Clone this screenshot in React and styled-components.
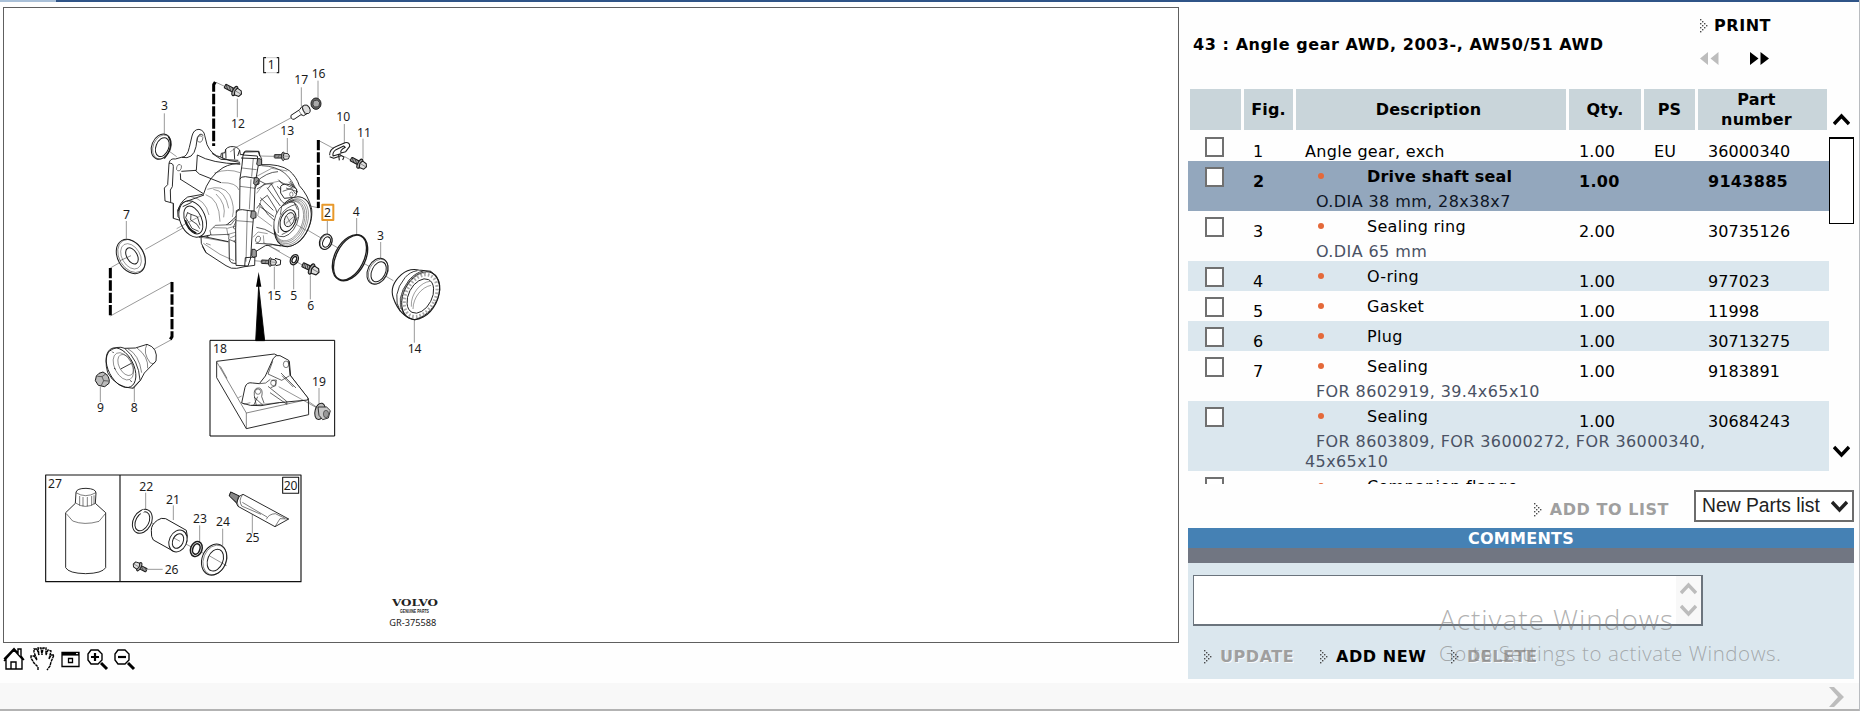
import styled, { createGlobalStyle } from 'styled-components'

const GlobalStyle = createGlobalStyle`
    body {
        margin: 0;
        background: #fefefe;
        overflow: hidden;
        font-family: "DejaVu Sans", Verdana, sans-serif;
        font-size: 16px;
        color: #000;
    }
    * { box-sizing: border-box; }
`

const Page = styled.div`
    width: 1860px;
    height: 711px;
    display: flex;
    flex-direction: column;
    position: relative;
    overflow: hidden;
    border-right: 1px solid #b9bcc0;
`

const TopLine = styled.div`
    height: 2px;
    flex: none;
    background: linear-gradient(to right, #a9c0d8 56px, #2f5487 56px);
`

const Main = styled.div`
    height: 681px;
    flex: none;
    display: flex;
`

const LeftPane = styled.section`
    width: 1180px;
    padding: 5px 0 0 3px;
    margin-right: 8px;
`

const DrawingFrame = styled.div`
    width: 1176px;
    height: 636px;
    border: 1px solid #5f5f5f;
    padding: 32px 0 0 26px;
    background: #fff;

    svg { display: block; }
`

const Tools = styled.div`
    display: flex;
    padding-top: 3px;

    svg { display: block; margin-right: 3px; }
`

const RightPane = styled.section`
    width: 666px;
    display: flex;
    flex-direction: column;
`

const Heading = styled.header`
    height: 87px;
    display: flex;
    justify-content: space-between;
    padding: 0 80px 0 5px;
    font-weight: bold;
`

const Title = styled.h1`
    margin: 33px 0 0;
    font-size: 16px;
    line-height: 20px;
    letter-spacing: .57px;
    white-space: nowrap;
`

const PrintArea = styled.div`
    width: 74px;
    padding-top: 14px;
`

const Pager = styled.div`
    display: flex;
    justify-content: space-between;
    width: 69px;
    margin-top: 15px;

    svg { display: block; }
`

const Action = styled.span`
    display: inline-flex;
    align-items: center;
    height: 20px;
    line-height: 20px;
    font-weight: bold;
    white-space: nowrap;
    letter-spacing: .55px;
    color: ${p => (p.$off ? '#9f9f9f' : '#000')};
    text-shadow: ${p => (p.$off ? '1px 1px 0 rgba(255,255,255,.8)' : 'none')};

    svg { margin-right: ${p => p.$gap || 8}px; flex: none; }
`

const TableArea = styled.div`
    display: flex;
    height: 395px;
`

const Table = styled.div`
    width: 641px;
    display: flex;
    flex-direction: column;
`

const HeadRow = styled.div`
    display: grid;
    grid-template-columns: 51px 49px 270px 72px 51px 129px;
    gap: 3px;
    height: 41px;
    margin: 0 0 1px 2px;
    flex: none;
`

const HeadCell = styled.div`
    display: flex;
    align-items: center;
    justify-content: center;
    text-align: center;
    background: #c9d5da;
    font-weight: bold;
    line-height: 20px;
    letter-spacing: .2px;
    padding-right: ${p => p.$shift || 0}px;
`

const Rows = styled.div`
    flex: 1;
    overflow: hidden;
`

const Row = styled.div`
    display: grid;
    grid-template-columns: 65px 52px 274px 75px 54px 1fr;
    height: ${p => 30 + p.$extra * 20}px;
    line-height: 20px;
    white-space: nowrap;
    background: ${p => (p.$selected ? '#93a7bd' : p.$tinted ? '#dbe7ee' : 'transparent')};
`

const Check = styled.span`
    width: 19px;
    height: 20px;
    margin: 6px 0 0 17px;
    border: 2px solid #707070;
    background: #fff;
`

const Value = styled.span`
    padding-top: 11px;
    font-weight: ${p => (p.$bold ? 'bold' : 'normal')};
    letter-spacing: ${p => (p.$bold ? '.3px' : '.1px')};
`

const Description = styled.div`
    padding-top: ${p => (p.$child ? 6 : 11)}px;
`

const Name = styled.div`
    display: flex;
    align-items: center;
    font-weight: ${p => (p.$bold ? 'bold' : 'normal')};
    letter-spacing: ${p => (p.$bold ? '.2px' : '.3px')};
`

const Bullet = styled.i`
    width: 6px;
    height: 6px;
    margin: 0 43px 2px 13px;
    border-radius: 50%;
    background: #e4693a;
`

const Note = styled.div`
    margin-top: 5px;
    line-height: 20px;
    color: ${p => (p.$selected ? '#0e1524' : '#4a5264')};
    letter-spacing: .4px;
    text-indent: 11px;
    white-space: pre;
`

const Scroller = styled.div`
    width: 25px;
    padding-top: 24px;
    display: flex;
    flex-direction: column;
    align-items: center;

    svg { display: block; }
`

const Thumb = styled.div`
    width: 25px;
    height: 87px;
    margin: 11px 0 221px;
    border: 1px solid #000;
    border-top-width: 2px;
    background: #fff;
`

const ListBar = styled.div`
    display: flex;
    height: 44px;
    justify-content: flex-end;
    align-items: flex-start;
    padding-top: 6px;
`

const AddToList = styled.div`
    padding-top: 10px;
    margin-right: 25px;
`

const Select = styled.div`
    width: 160px;
    height: 32px;
    border: 2px solid #6c6c6c;
    background: #fff;
    padding: 0 4px 0 6px;
    display: flex;
    align-items: center;
    justify-content: space-between;
    font: 19.3px/26px "Liberation Sans", Arial, sans-serif;
    color: #222;
    white-space: nowrap;
`

const CommentsTitle = styled.div`
    height: 20px;
    line-height: 21px;
    background: #4581b4;
    color: #fff;
    font-weight: bold;
    text-align: center;
    letter-spacing: .25px;
`

const GrayBar = styled.div`
    height: 15px;
    background: #717682;
`

const CommentsBody = styled.div`
    height: 116px;
    background: #dbe7ee;
    padding: 12px 5px;
`

const TextBox = styled.div`
    width: 510px;
    height: 51px;
    border: 2px solid #6b747d;
    border-width: 1px 2px 2px 1px;
    background: #fff;
    display: flex;
    justify-content: flex-end;
`

const TextScroll = styled.div`
    width: 25px;
    background: #f8f8f8;
    display: flex;
    flex-direction: column;
    align-items: center;
    justify-content: space-between;
    padding: 6px 0 7px;
`

const Buttons = styled.div`
    display: flex;
    padding: 21px 0 0 11px;
`

const ButtonSlot = styled.div`
    width: ${p => p.$width}px;
`

const Footer = styled.footer`
    height: 26px;
    flex: none;
    background: #f8f8f8;
    display: flex;
    justify-content: flex-end;
    padding: 4px 14px 0 0;
`

const BottomLine = styled.div`
    height: 2px;
    flex: none;
    background: #b3b3b3;
`

// sits over the comments panel
const Watermark = styled.div`
    position: absolute;
    left: 1439px;
    top: 600px;
    color: rgba(125, 125, 125, .6);
    font-family: "Open Sans", "Noto Sans", sans-serif;
    font-weight: 300;
    white-space: nowrap;
`

const WatermarkTitle = styled.div`
    font-size: 28px;
    line-height: 38px;
    letter-spacing: .95px;
`

const WatermarkText = styled.div`
    font-size: 20.5px;
    line-height: 30px;
    letter-spacing: .55px;
`

const arrowDots = [[0, 0], [2, 2], [0, 4], [4, 4], [2, 6], [6, 6], [0, 8], [4, 8], [2, 10], [0, 12]]

function DotArrow() {
    return (
        <svg width="8" height="14" viewBox="0 0 8 14">
            {arrowDots.map(([x, y]) => <rect key={`${x}-${y}`} x={x} y={y} width="1.4" height="1.4" fill="#4a4a4a" />)}
        </svg>
    )
}

function Chevron({ up, color = '#000' }) {
    return (
        <svg width="17" height="13" viewBox="0 0 17 13">
            <path d={up ? 'M1 11 8.5 3 16 11' : 'M1 2 8.5 10 16 2'} fill="none" stroke={color} strokeWidth="3.4" />
        </svg>
    )
}

function Ring({ x, y, rx, ry, a = 24, inner = 0.68, dx = 0, thick = 3 }) {
    return (
        <g transform={`translate(${x} ${y}) rotate(${a})`} strokeWidth={thick}>
            <ellipse cx={-dx} rx={rx} ry={ry} fill="#fff" />
            {dx > 0 && <ellipse rx={rx - dx / 2} ry={ry * 0.96} strokeWidth="1.4" />}
            <ellipse cx={dx / 3} rx={rx * inner} ry={ry * (inner + 0.08)} fill="#fff" />
        </g>
    )
}

// threaded shaft on the left, flange and hex head on the right
function Bolt({ x, y, a = 0, len = 34, size = 1 }) {
    const threads = []
    for (let i = 3; i < len - 2; i += 5) threads.push(i)
    return (
        <g transform={`translate(${x} ${y}) rotate(${a}) scale(${size})`} strokeWidth="3.2">
            <rect x="0" y="-6" width={len} height="12" rx="2" fill="#ccc" />
            {threads.map(t => <path key={t} d={`M${t} -6 l3 12`} strokeWidth="2" />)}
            <ellipse cx={len + 2} cy="0" rx="6" ry="15" fill="#aaa" />
            <path d={`M${len + 5} -11 l14 2 5 8 -4 10 -14 2 -4 -11z`} fill="#ddd" />
            <path d={`M${len + 4} -1 l18 1`} strokeWidth="1.2" />
        </g>
    )
}

const dashed = [
    'M556 126 L551 134 V318',
    'M865 300 V504',
    'M241 684 V828',
    'M426 726 V890 L421 898',
]

const leaders = [
    'M403 220V282', 'M622 176V232', 'M814 142V198', 'M864 122V176', 'M943 252V310', 'M999 296V356',
    'M772 294V338', 'M892 540V584', 'M980 534V584', 'M1052 606V656', 'M289 543V596', 'M733 680V748',
    'M791 674V748', 'M841 706V778', 'M1153 840V908', 'M211 1040V1086', 'M313 1038V1086', 'M867 1044V1092',
    'M347 1358V1410', 'M430 1396V1440', 'M509 1456V1506', 'M578 1466V1516', 'M667 1422V1480', 'M354 1588H398',
]

const axes = [
    'M558 127 590 142', 'M396 318 440 350', 'M622 320 786 232', 'M690 348 732 349', 'M867 302 912 326',
    'M944 350 962 360', 'M346 628 512 534', 'M241 684 300 650', 'M241 828 426 726', 'M426 898 290 972',
    'M790 545 1090 722', 'M700 608 836 686', 'M232 1004 270 986', 'M842 498 866 504', 'M672 662 694 664',
    'M342 1437 372 1452', 'M430 1492 590 1577', 'M764 1035 858 1100',
]

const labels = [
    [713, 88, '1'], [393, 210, '3'], [603, 265, '12'], [793, 132, '17'], [845, 113, '16'], [751, 286, '13'],
    [919, 244, '10'], [981, 291, '11'], [882, 531, '2'], [968, 528, '4'], [1041, 600, '3'], [279, 537, '7'],
    [712, 781, '15'], [781, 781, '5'], [832, 811, '6'], [1133, 940, '14'], [549, 940, '18'], [201, 1115, '9'],
    [302, 1115, '8'], [846, 1038, '19'], [54, 1343, '27'], [328, 1353, '22'], [408, 1392, '21'],
    [489, 1449, '23'], [558, 1459, '24'], [647, 1505, '25'], [404, 1601, '26'], [761, 1350, '20'],
]

function Housing() {
    return (
        <g transform="translate(270 180)" strokeWidth="2.8">
            <path fill="#fff" d="M160 310 135 303 133 264 143 254 147 190Q150 174 166 177L184 172Q202 172 208 142L216 108Q221 88 237 88 252 91 254 106L261 134Q276 167 302 171L304 160 315 158 317 148Q328 135 350 142L359 150 361 164 370 163 376 153 417 154 420 168 425 176 423 194Q481 191 508 212 530 231 538 257 564 284 575 327C580 375 550 432 504 440L458 434 436 437 405 456 404 496 374 500 350 505Q334 508 318 497L258 458 244 430 243 408 217 396 187 363 160 355Z" />
            <path d="M147 190Q160 188 160 200L157 260 151 270 152 306M160 310 160 355M187 363 174 350 173 330 180 318M185 172Q220 180 228 140L232 113Q240 96 250 107M302 172 330 182 360 187M276 160 303 178 355 181M232 165Q275 190 360 192M180 237 250 281M181 220 182 238M225 210 238 222 303 248M232 165 229 211 184 214M317 148 318 176M342 145 344 178M359 150 353 168M308 160V175" />
            <ellipse cx="240" cy="117" rx="8" ry="10" strokeWidth="1.6" transform="rotate(25 240 117)" />
            <ellipse cx="177" cy="203" rx="7" ry="10" strokeWidth="1.6" transform="rotate(20 177 203)" />
            <path d="M250 284Q265 230 309 203 337 188 361 192M248 283 203 291Q176 309 175 334M259 411 300 389Q351 354 358 334" />
            <path strokeWidth="1.3" d="M262 268Q308 252 329 285 346 321 337 351M280 268Q316 272 326 325M288 282Q320 312 311 352M257 284Q298 296 300 365M283 219Q325 204 360 218M210 289Q257 298 267 345M304 248Q349 247 357 270" />
            <ellipse cx="218" cy="357" rx="38" ry="57" transform="rotate(-23 218 357)" fill="#fff" />
            <path d="M200 304 252 285M237 412 266 406M188 320 215 307" />
            <ellipse cx="220" cy="360" rx="25" ry="44" transform="rotate(-23 220 360)" />
            <path strokeWidth="2.4" d="M203 337 197 353 206 367 216 385 236 394M202 338 213 343 212 360 231 373 239 386M213 343 232 350 240 376" />
            <path d="M196 360Q204 389 229 400" strokeWidth="5" />
            <path fill="#fff" d="M270 392 286 376 333 374 345 358 350 360 342 377 340 384 355 394 363 407 342 424 326 418 327 403 273 405Z" strokeWidth="2" />
            <path strokeWidth="1.4" d="M280 383 320 384 324 407M322 385 355 376M325 403 352 395M330 414 353 404M244 412 325 426M250 430 300 463 342 482M258 430 272 435" />
            <path d="M327 420 328 478Q331 492 349 490L374 486M243 408 325 425M258 458 247 439M341 424 348 428 348 482" />
            <path fill="#fff" d="M369 165 412 168 415 195 409 230 405 262 402 336 397 390 392 474 384 498 348 496 347 388 349 332 359 327 360 235 366 195Z" />
            <path d="M370 166 372 156 415 155 419 168M359 238Q362 229 376 230L408 235M349 338Q351 329 367 329L402 334M363 174 411 176M374 500 376 473 405 471" />
            <path strokeWidth="1.6" d="M360 259 406 265M349 362 399 366M382 330 378 485M393 238 388 328M400 174 395 230M366 204 410 209" />
            <g fill="#999">
                <path d="M413 176h8l4 5v14l-9 2-6-4zM403 233h10l4 5v14l-10 3-6-4zM394 333h10l4 5v15l-10 3-6-4zM396 448h9l4 5v17l-10 2-4-5z" />
            </g>
            <path strokeWidth="2.2" d="M425 197Q466 198 494 219 519 242 532 278M407 247Q440 216 474 215M411 267 437 252 460 251M418 309 445 345 474 371M421 302 442 286 467 326 472 342M421 293 460 331M444 265 454 252 484 303 493 310M441 263 481 318M471 259 501 286M475 239 509 274M510 243 533 276M437 252 418 242 405 265M419 313 410 325M420 320 462 350M409 382 434 388 463 403M407 430 453 432 482 438" />
            <path strokeWidth="1.3" d="M408 230 455 205 502 213M410 280 429 254 479 243M423 300 413 347 456 379M399 412 414 396 443 401M430 406 432 429" />
            <path fill="#fff" d="M482 279V259Q489 249 509 254L530 267 529 285 523 292 493 295Z" />
            <path strokeWidth="2" d="M498 264 530 274M488 274 514 265 527 282M506 247 523 260M478 244 520 265" />
            <ellipse cx="514" cy="283" rx="5" ry="7" strokeWidth="1.5" />
            <ellipse cx="518" cy="365" rx="51" ry="78" transform="rotate(22 518 365)" fill="#fff" />
            <g strokeWidth="1.2">
                <ellipse cx="515" cy="366" rx="46" ry="73" transform="rotate(22 515 366)" />
                <ellipse cx="512" cy="365" rx="44" ry="69" transform="rotate(22 512 365)" />
                <ellipse cx="509" cy="364" rx="42" ry="65" transform="rotate(22 509 364)" />
                <ellipse cx="507" cy="363" rx="40" ry="62" transform="rotate(22 507 363)" />
            </g>
            <ellipse cx="499" cy="358" rx="34" ry="55" transform="rotate(22 499 358)" fill="#fff" strokeWidth="2" />
            <path d="M475 399C470 350 490 323 528 313M485 404Q521 391 532 352M481 344 485 319 522 301M523 307 532 329" strokeWidth="2" />
            <ellipse cx="504" cy="362" rx="22" ry="34" transform="rotate(22 504 362)" fill="#fff" strokeWidth="3" />
            <ellipse cx="508" cy="359" rx="14" ry="22" transform="rotate(22 508 359)" fill="#f2f2f2" strokeWidth="2.6" />
            <path d="M497 371 521 350M500 348 515 376" strokeWidth="1.5" />
            <ellipse cx="414" cy="418" rx="7" ry="10" strokeWidth="1.7" transform="rotate(22 414 418)" />
            <path d="M170 386 239 349M530 374 560 392M430 428 480 454M330 156 352 140" strokeWidth="1.2" />
        </g>
    )
}

function PartsDrawing() {
    return (
        <svg width="430" height="600" viewBox="0 0 1290 1800" fill="none" stroke="#1c1c1c" strokeWidth="2.6" strokeLinejoin="round">
            <g stroke="#666" strokeWidth="2">
                {axes.map(d => <path key={d} d={d} />)}
                {leaders.map(d => <path key={d} d={d} />)}
            </g>
            <g stroke="#000" strokeWidth="9" strokeDasharray="31 6">
                {dashed.map(d => <path key={d} d={d} />)}
            </g>

            <Housing />

            <path d="M708 53H701V98H708M740 53H746V98H740" strokeWidth="3.4" />
            <path d="M708 53H740M708 98H740" stroke="#999" strokeWidth="1.5" />
            <Bolt x={585} y={138} a={27} len={31} />
            <Bolt x={733} y={349} len={29} size={0.86} />
            <Bolt x={963} y={357} a={28} len={28} />
            <Bolt x={818} y={674} a={26} len={25} size={1.1} />
            <Bolt x={694} y={665} a={3} len={29} size={0.86} />
            <path d="M735 655 752 660 751 674 737 677" strokeWidth="3" />

            <path d="M783 226 809 209 816 199 833 196Q844 206 836 218L821 227 813 224 792 238Q781 238 783 226Z" fill="#fff" strokeWidth="3" />
            <ellipse cx="829" cy="208" rx="10" ry="14" transform="rotate(-28 829 208)" fill="#ddd" />
            <path d="M806 211 816 226M817 202 824 222" strokeWidth="1.5" />
            <ellipse cx="858" cy="191" rx="15" ry="17" fill="#666" strokeWidth="3" />
            <path d="M850 183 862 180 869 188 866 200 853 201 849 194Z" fill="#aaa" strokeWidth="2" />

            <path d="M899 346Q898 328 920 319L945 308Q960 306 959 319L947 335 933 339Q929 331 946 322L941 318 918 329Q907 336 909 348L932 341M899 350 911 355 933 347M929 344 942 351 938 360M926 344 928 361" strokeWidth="3.2" />

            <Ring x={396} y={321} rx={28} ry={39} a={22} dx={3} />
            <path d="M415 290Q433 318 403 356" strokeWidth="3.4" />
            <Ring x={889} y={606} rx={18} ry={24} dx={2} thick={3.4} inner={0.6} />
            <Ring x={960} y={653} rx={46} ry={74} a={27} thick={4} inner={0.9} />
            <Ring x={1045} y={695} rx={29} ry={41} a={26} inner={0.7} dx={3} />
            <Ring x={793} y={659} rx={11} ry={16} a={27} inner={0.55} thick={4} />

            <Ring x={305} y={648} rx={39} ry={55} a={-30} inner={0.4} dx={3} />
            <ellipse cx="303" cy="649" rx="27" ry="41" transform="rotate(-30 303 649)" strokeWidth="1.2" />
            <path d="M270 662 303 647" strokeWidth="1.5" />

            <path d="M1090 774Q1077 737 1114 704 1137 684 1166 690L1202 694Q1232 716 1229 750 1219 818 1155 839 1110 831 1090 774Z" fill="#fff" strokeWidth="3.2" />
            <path d="M1111 815Q1083 764 1125 713 1140 695 1162 692M1123 824Q1092 780 1137 720 1158 697 1180 693" />
            <ellipse cx="1172" cy="767" rx="51" ry="76" transform="rotate(27 1172 767)" strokeWidth="3.4" />
            <ellipse cx="1172" cy="767" rx="44" ry="67" transform="rotate(27 1172 767)" stroke="#aaa" strokeWidth="10" strokeDasharray="5 6" />
            <ellipse cx="1171" cy="768" rx="35" ry="55" transform="rotate(27 1171 768)" fill="#fff" />
            <path d="M1113 806Q1107 760 1140 722 1160 699 1188 697" strokeWidth="6" stroke="#777" strokeDasharray="3 3" />
            <path d="M1144 800C1141 759 1174 726 1200 724M1149 807C1149 773 1175 741 1203 736" strokeWidth="1.3" />

            {/* drive flange and its nut */}
            <path d="M236 935Q262 915 284 925L316 924 351 913Q385 923 378 963L343 999 332 1020 310 1045Q258 1043 233 998 222 958 236 935Z" fill="#fff" strokeWidth="2.8" />
            <ellipse cx="273" cy="983" rx="38" ry="64" transform="rotate(-27 273 983)" />
            <path d="M284 925Q326 960 330 1020M308 1044 331 1021" />
            <path d="M293 926Q327 943 335 998M321 924Q356 950 353 985M351 913Q337 938 361 969 370 974 376 967" strokeWidth="1.6" />
            <ellipse cx="280" cy="979" rx="26" ry="44" transform="rotate(-27 280 979)" strokeWidth="1.3" />
            <ellipse cx="287" cy="975" rx="20" ry="34" transform="rotate(-27 287 975)" strokeWidth="1.3" />
            <path d="M272 987 304 970M247 935l4 4M252 984l5 4M301 1021l4 5" />
            <path d="M207 1000 219 996Q242 1008 237 1030L224 1040 205 1036 196 1022 199 1008Z" fill="#bbb" strokeWidth="3" />
            <path d="M202 1009 216 1010 221 1022 214 1036M216 1010 227 1002M221 1022 235 1023" strokeWidth="1.8" />

            {/* bracket kit */}
            <path d="M686 696 678 740H694Z" fill="#000" stroke="none" />
            <path d="M686 738 677 902H704Z" fill="#000" stroke="#000" />
            <path d="M540 901H914V1188H540Z" stroke="#000" strokeWidth="3" />
            <path d="M560 964 733 942 778 964 782 1008 835 1076 836 1124 649 1166 560 1013Z" fill="#fff" strokeWidth="2.8" />
            <path d="M561 967 649 1119 835 1078M649 1119V1166M571 979 591 1015" strokeWidth="1.6" />
            <path fill="#fff" strokeWidth="2.8" d="M635 1089 645 1042Q650 1025 668 1029L688 1031 706 1008 730 955Q737 943 750 947L776 961 780 1005 834 1074 833 1080 747 1088 693 1097 661 1096Z" />
            <path d="M679 1097 673 1067Q670 1042 688 1044 700 1048 695 1070L702 1089M714 1039 770 1084 771 1093 720 1058M753 999 798 1044M756 1007 790 1041M721 1018 707 1029 689 1031M722 1043 737 1037 739 1020 724 1021M672 1071 699 1096M683 1070 671 1096M728 964 714 1002 755 1021 779 1007" strokeWidth="2" />
            <circle cx="684" cy="1055" r="8" strokeWidth="1.6" />
            <circle cx="730" cy="1029" r="8" strokeWidth="1.6" />
            <ellipse cx="768" cy="973" rx="8" ry="10" strokeWidth="1.7" />
            <path d="M625 1073 635 1068M641 1093 661 1088M664 1096 747 1088M746 1040 858 1102" strokeWidth="1.4" />
            <ellipse cx="870" cy="1114" rx="15" ry="25" transform="rotate(15 870 1114)" fill="#bbb" strokeWidth="3" />
            <path d="M864 1101 890 1101 901 1112 895 1134 878 1139 867 1126Z" fill="#c9c9c9" strokeWidth="2.6" />
            <ellipse cx="888" cy="1122" rx="8" ry="11" fill="#999" strokeWidth="1.6" />

            {/* service kit */}
            <path d="M47 1305H813V1625H47ZM270 1305V1625" stroke="#111" strokeWidth="3.4" />
            <rect x="758" y="1312" width="48" height="48" stroke="#111" strokeWidth="3.2" />
            <path d="M138 1357Q140 1345 168 1345 198 1346 198 1359L196 1390 227 1418V1583Q217 1600 167 1601 116 1600 107 1583V1418L136 1390Z" fill="#fff" strokeWidth="2.8" />
            <path d="M138 1358Q166 1376 198 1358M137 1389Q165 1409 196 1390M149 1368V1397M159 1371V1399M172 1371V1399M185 1368V1397M192 1366V1393M109 1421 128 1443Q163 1457 207 1444L226 1421" strokeWidth="1.7" />

            <Ring x={337} y={1444} rx={27} ry={38} a={28} inner={0.72} />
            <path d="M333 1421 342 1410" stroke="#fff" strokeWidth="7" />
            <path d="M364 1472Q363 1454 382 1441 393 1432 407 1436L469 1471Q476 1489 467 1507 457 1531 431 1534L370 1500Q363 1492 364 1472Z" fill="#fff" strokeWidth="3" />
            <Ring x={444} y={1503} rx={26} ry={34} a={25} inner={0.6} />
            <Ring x={499} y={1527} rx={17} ry={23} a={20} inner={0.62} thick={4.6} />
            <Ring x={555} y={1560} rx={36} ry={48} a={22} inner={0.63} dx={3} />
            <path d="M430 1493 450 1504M539 1548 588 1576" strokeWidth="1.4" />
            <g transform="translate(345 1589) rotate(207)"><Bolt x={-5} y={0} len={25} size={0.9} /></g>

            <path d="M602 1356 628 1369 639 1363 776 1437 735 1460 624 1399 619 1389 598 1367Z" fill="#fff" strokeWidth="2.8" />
            <path d="M602 1356 628 1368 620 1388 598 1368Z" fill="#888" />
            <path d="M628 1367Q618 1378 625 1399M637 1366Q625 1380 635 1398M635 1398 693 1423M709 1438Q716 1422 736 1421L765 1435M735 1460 750 1436 776 1437M637 1387 711 1431" strokeWidth="1.7" />

            <rect x="877" y="494" width="33" height="46" stroke="#e8992b" strokeWidth="6" />
            <g fill="#1c1c1c" stroke="none" fontFamily='"Noto Sans", sans-serif' fontSize="36.500">
                {labels.map(([x, y, n]) => <text key={`${x}-${y}`} x={x} y={y}>{n}</text>)}
            </g>
            <g fill="#222" stroke="none">
                <text x="1086" y="1699" fontFamily='"DejaVu Serif", serif' fontWeight="bold" fontSize="26" textLength="138" lengthAdjust="spacingAndGlyphs">VOLVO</text>
                <text x="1110" y="1720" fontFamily='"Liberation Sans", sans-serif' fontWeight="bold" fontSize="16" textLength="87" lengthAdjust="spacingAndGlyphs">GENUINE PARTS</text>
                <text x="1078" y="1757" fontFamily='"Noto Sans", sans-serif' fontSize="26" textLength="141" lengthAdjust="spacingAndGlyphs">GR-375588</text>
            </g>
        </svg>
    )
}

function ToolIcons() {
    return (
        <Tools>
            <svg width="24" height="26" viewBox="3 647 24 26" fill="none" stroke="#000" strokeWidth="1.4">
                <path d="M4 662 14 651 23 661M4 660 14 649.5 18 654V650h3v7l3 4M6 660v10h16V660M11 670v-7h5v7" />
            </svg>
            <svg width="26" height="26" viewBox="30 647 26 26" fill="none" stroke="#000" strokeWidth="1.4">
                <path d="M38 671v-3l-4-4-3-5v-2h3l3 4-3-8v-3h3l2 6-1-7h3l1 7 1-7h3v7l2-5 3 1-2 8 2-4h3l-3 7-1 4-3 4" strokeDasharray="3 .6" />
            </svg>
            <svg width="24" height="26" viewBox="59 647 24 26" fill="none" stroke="#000" strokeWidth="1.3">
                <path d="M62 653.5h17v14H62zM68.5 659.5h4v4h-4z" />
                <path d="M62 655h17" strokeWidth="3.2" />
                <path d="M76 654.6h2" stroke="#fff" strokeWidth="1" />
            </svg>
            {['M91 658h8M95 654v8', 'M91 658h8'].map(d => (
                <svg key={d} width="24" height="26" viewBox="86 647 24 26" fill="none" stroke="#000">
                    <path d="M91 651h7l4 4v6l-4 4h-7l-3-4v-6z" strokeWidth="1.4" />
                    <path d={d} strokeWidth="2.2" />
                    <path d="M101 664 107 670" strokeWidth="3" />
                </svg>
            ))}
        </Tools>
    )
}

const parts = [
    { fig: '1', name: 'Angle gear, exch', qty: '1.00', ps: 'EU', number: '36000340', root: true },
    { fig: '2', name: 'Drive shaft seal', note: 'O.DIA 38 mm, 28x38x7', qty: '1.00', number: '9143885', selected: true },
    { fig: '3', name: 'Sealing ring', note: 'O.DIA 65 mm', qty: '2.00', number: '30735126' },
    { fig: '4', name: 'O-ring', qty: '1.00', number: '977023' },
    { fig: '5', name: 'Gasket', qty: '1.00', number: '11998' },
    { fig: '6', name: 'Plug', qty: '1.00', number: '30713275' },
    { fig: '7', name: 'Sealing', note: 'FOR 8602919, 39.4x65x10', qty: '1.00', number: '9183891' },
    { fig: '', name: 'Sealing', note: 'FOR 8603809, FOR 36000272, FOR 36000340,\n45x65x10', qty: '1.00', number: '30684243' },
    { fig: '', name: 'Companion flange', qty: '', number: '' },
]

function PartRow({ part, tinted }) {
    const { fig, name, note, qty, ps, number, root, selected } = part
    return (
        <Row $extra={note ? note.split('\n').length : 0} $selected={selected} $tinted={tinted}>
            <Check />
            <Value $bold={selected}>{fig}</Value>
            <Description $child={!root}>
                <Name $bold={selected}>{!root && <Bullet />}{name}</Name>
                {note && <Note $selected={selected}>{note}</Note>}
            </Description>
            <Value $bold={selected}>{qty}</Value>
            <Value>{ps}</Value>
            <Value $bold={selected}>{number}</Value>
        </Row>
    )
}

export default function App() {
    return (
        <Page>
            <GlobalStyle />
            <TopLine />
            <Main>
                <LeftPane>
                    <DrawingFrame><PartsDrawing /></DrawingFrame>
                    <ToolIcons />
                </LeftPane>
                <RightPane>
                    <Heading>
                        <Title>43 : Angle gear AWD, 2003-, AW50/51 AWD</Title>
                        <PrintArea>
                            <Action $gap={6}><DotArrow />PRINT</Action>
                            <Pager>
                                <svg width="19" height="13" viewBox="0 0 19 13" fill="#bdbdbd"><path d="M8 0v13L0 6.5zM18.500 0v13L10.500 6.500z" /></svg>
                                <svg width="19" height="13" viewBox="0 0 19 13"><path d="M0 0v13l8.500-6.500zM10.500 0v13l8.500-6.500z" /></svg>
                            </Pager>
                        </PrintArea>
                    </Heading>
                    <TableArea>
                        <Table>
                            <HeadRow>
                                <HeadCell />
                                <HeadCell>Fig.</HeadCell>
                                <HeadCell $shift={5}>Description</HeadCell>
                                <HeadCell>Qty.</HeadCell>
                                <HeadCell>PS</HeadCell>
                                <HeadCell $shift={12}>Part<br />number</HeadCell>
                            </HeadRow>
                            <Rows>
                                {parts.map((part, i) => <PartRow key={i} part={part} tinted={i % 2 === 1} />)}
                            </Rows>
                        </Table>
                        <Scroller>
                            <Chevron up />
                            <Thumb />
                            <Chevron />
                        </Scroller>
                    </TableArea>
                    <ListBar>
                        <AddToList><Action $off><DotArrow />ADD TO LIST</Action></AddToList>
                        <Select>New Parts list<Chevron color="#222" /></Select>
                    </ListBar>
                    <CommentsTitle>COMMENTS</CommentsTitle>
                    <GrayBar />
                    <CommentsBody>
                        <TextBox>
                            <TextScroll>
                                <Chevron up color="#bcbcbc" />
                                <Chevron color="#bcbcbc" />
                            </TextScroll>
                        </TextBox>
                        <Buttons>
                            <ButtonSlot $width={116}><Action $off><DotArrow />UPDATE</Action></ButtonSlot>
                            <ButtonSlot $width={131}><Action><DotArrow />ADD NEW</Action></ButtonSlot>
                            <ButtonSlot $width={90}><Action $off><DotArrow />DELETE</Action></ButtonSlot>
                        </Buttons>
                    </CommentsBody>
                </RightPane>
            </Main>
            <Footer>
                <svg width="16" height="20" viewBox="0 0 16 20" fill="#bdbdbd"><path d="M0 0h5l10 10-10 10H0l9-10z" /></svg>
            </Footer>
            <BottomLine />
            <Watermark>
                <WatermarkTitle>Activate Windows</WatermarkTitle>
                <WatermarkText>Go to Settings to activate Windows.</WatermarkText>
            </Watermark>
        </Page>
    )
}
